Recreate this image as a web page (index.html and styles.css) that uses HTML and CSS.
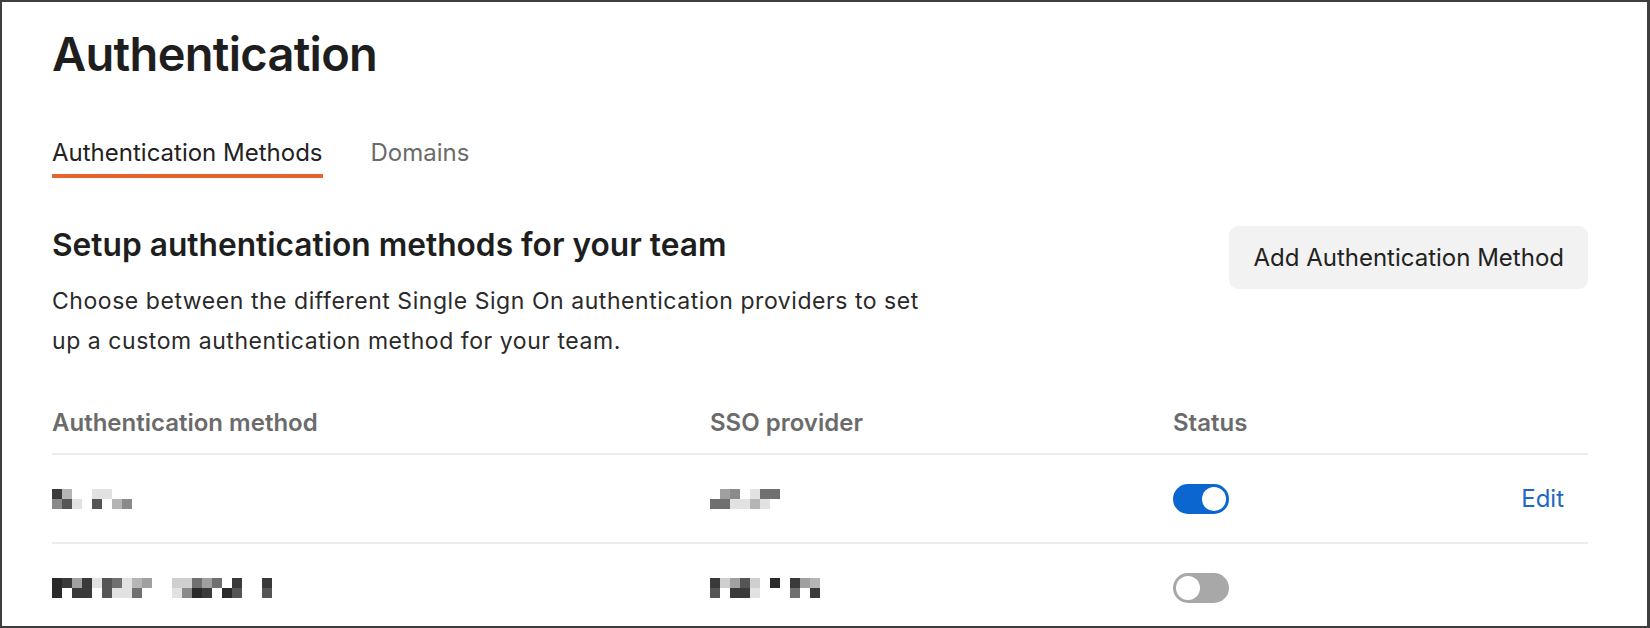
FILE: index.html
```html
<!DOCTYPE html>
<html lang="en">
<head>
<meta charset="UTF-8">
<title>Authentication</title>
<meta name="viewport" content="width=device-width, initial-scale=1">
<link rel="stylesheet" href="styles.css">
</head>
<body>

<div class="page">

<h1 class="title">Authentication</h1>

<div class="tabs">
<div class="tab active">Authentication Methods</div>
<div class="tab">Domains</div>
</div>

<div class="section">
<div class="intro">
<h2>Setup authentication methods for your team</h2>
<p>Choose between the different Single Sign On authentication providers to set up a custom authentication method for your team.</p>
</div>
<button class="btn">Add Authentication Method</button>
</div>

<div class="table">

<div class="row head">
<div>Authentication method</div>
<div>SSO provider</div>
<div>Status</div>
<div></div>
</div>

<div class="row">
<div>
<!-- blurred name -->
<div class="pix">
<div><i class="s2"></i><i class="s7"></i><i></i><i></i><i class="s9"></i><i class="s9"></i><i></i><i></i></div>
<div><i class="s5"></i><i class="s3"></i><i class="s9"></i><i></i><i class="s3"></i><i></i><i class="s7"></i><i class="s5"></i></div>
</div>
</div>
<div>
<div class="pix">
<div><i></i><i class="s6"></i><i class="s5"></i><i></i><i class="s9"></i><i class="s4"></i><i class="s4"></i></div>
<div><i class="s4"></i><i class="s4"></i><i class="s9"></i><i class="s9"></i><i class="s7"></i><i class="s9"></i><i></i></div>
</div>
</div>
<div><span class="toggle on"></span></div>
<div><a class="edit" href="#">Edit</a></div>
</div>

<div class="row">
<div>
<div class="pix">
<div><i class="s1"></i><i class="s2"></i><i class="s6"></i><i class="s2"></i><i class="s9"></i><i class="s3"></i><i class="s4"></i><i class="s9"></i><i class="s7"></i><i class="s6"></i><i></i><i></i><i class="s8"></i><i class="s8"></i><i class="s4"></i><i class="s6"></i><i class="s4"></i><i></i><i class="s2"></i><i></i><i></i><i class="s2"></i></div>
<div><i class="s1"></i><i></i><i class="s2"></i><i class="s2"></i><i></i><i class="s3"></i><i class="s9"></i><i class="s9"></i><i class="s4"></i><i></i><i></i><i></i><i class="s9"></i><i class="s5"></i><i class="s1"></i><i class="s2"></i><i></i><i class="s1"></i><i class="s3"></i><i></i><i></i><i class="s3"></i></div>
</div>
</div>
<div>
<div class="pix">
<div><i class="s2"></i><i class="s8"></i><i class="s6"></i><i class="s3"></i><i class="s8"></i><i></i><i class="s1"></i><i></i><i class="s2"></i><i class="s6"></i><i class="s7"></i></div>
<div><i class="s3"></i><i></i><i class="s2"></i><i class="s2"></i><i class="s9"></i><i></i><i></i><i></i><i class="s4"></i><i></i><i class="s2"></i></div>
</div>
</div>
<div><span class="toggle"></span></div>
<div></div>
</div>

</div>

</div>

</body>
</html>
```

FILE: styles.css
```css
*{
box-sizing:border-box;
}

body{
margin:0;
background:#fff;
font-family:Inter, "Liberation Sans", sans-serif;
color:#222;
}

.page{
height:628px;
overflow:hidden;
border:2px solid #3e3e3e;
border-right-width:3px;
padding:22px 59px 0 50px;
}

.title{
margin:0;
font-size:47px;
line-height:60px;
font-weight:600;
color:#1e1e1e;
letter-spacing:-0.7px;
}

.tabs{
display:flex;
gap:48px;
margin-top:55px;
}

.tab{
font-size:24px;
line-height:28px;
padding-bottom:7px;
border-bottom:4px solid transparent;
color:#6b6b6b;
}

.tab.active{
color:#222;
border-bottom-color:#e8632e;
}

.section{
display:flex;
justify-content:space-between;
align-items:flex-start;
margin-top:48px;
}

.intro h2{
margin:0;
font-size:31.7px;
line-height:38px;
font-weight:600;
color:#1e1e1e;
}

.intro p{
margin:17px 0 0;
max-width:880px;
font-size:23px;
letter-spacing:0.55px;
line-height:40px;
color:#2a2a2a;
}

.btn{
height:63px;
padding:0 24px;
border:0;
border-radius:9px;
background:#f2f2f2;
font-family:inherit;
font-size:24px;
color:#222;
}

.table{
margin-top:48px;
}

.row{
display:grid;
grid-template-columns:658px 463px 1fr auto;
align-items:center;
height:89px;
border-bottom:2px solid #ececec;
}

.row.head{
height:auto;
padding-bottom:16px;
font-size:24px;
line-height:28px;
font-weight:600;
color:#6b6b6b;
}

.pix div{
display:flex;
}

.pix i{
width:10px;
height:10px;
}

.s1{background:#2a2a2a}
.s2{background:#3a3a3a}
.s3{background:#555}
.s4{background:#707070}
.s5{background:#8a8a8a}
.s6{background:#a0a0a0}
.s7{background:#b5b5b5}
.s8{background:#cfcfcf}
.s9{background:#e2e2e2}

.toggle{
display:block;
position:relative;
width:56px;
height:30px;
border-radius:15px;
background:#a8a8a8;
}

.toggle::after{
content:"";
position:absolute;
top:3px;
left:3px;
width:24px;
height:24px;
border-radius:50%;
background:#fff;
}

.toggle.on{
background:#0b66d0;
}

.toggle.on::after{
left:29px;
}

.edit{
display:block;
padding-right:24px;
font-size:24px;
color:#1c68c3;
text-decoration:none;
}
```
